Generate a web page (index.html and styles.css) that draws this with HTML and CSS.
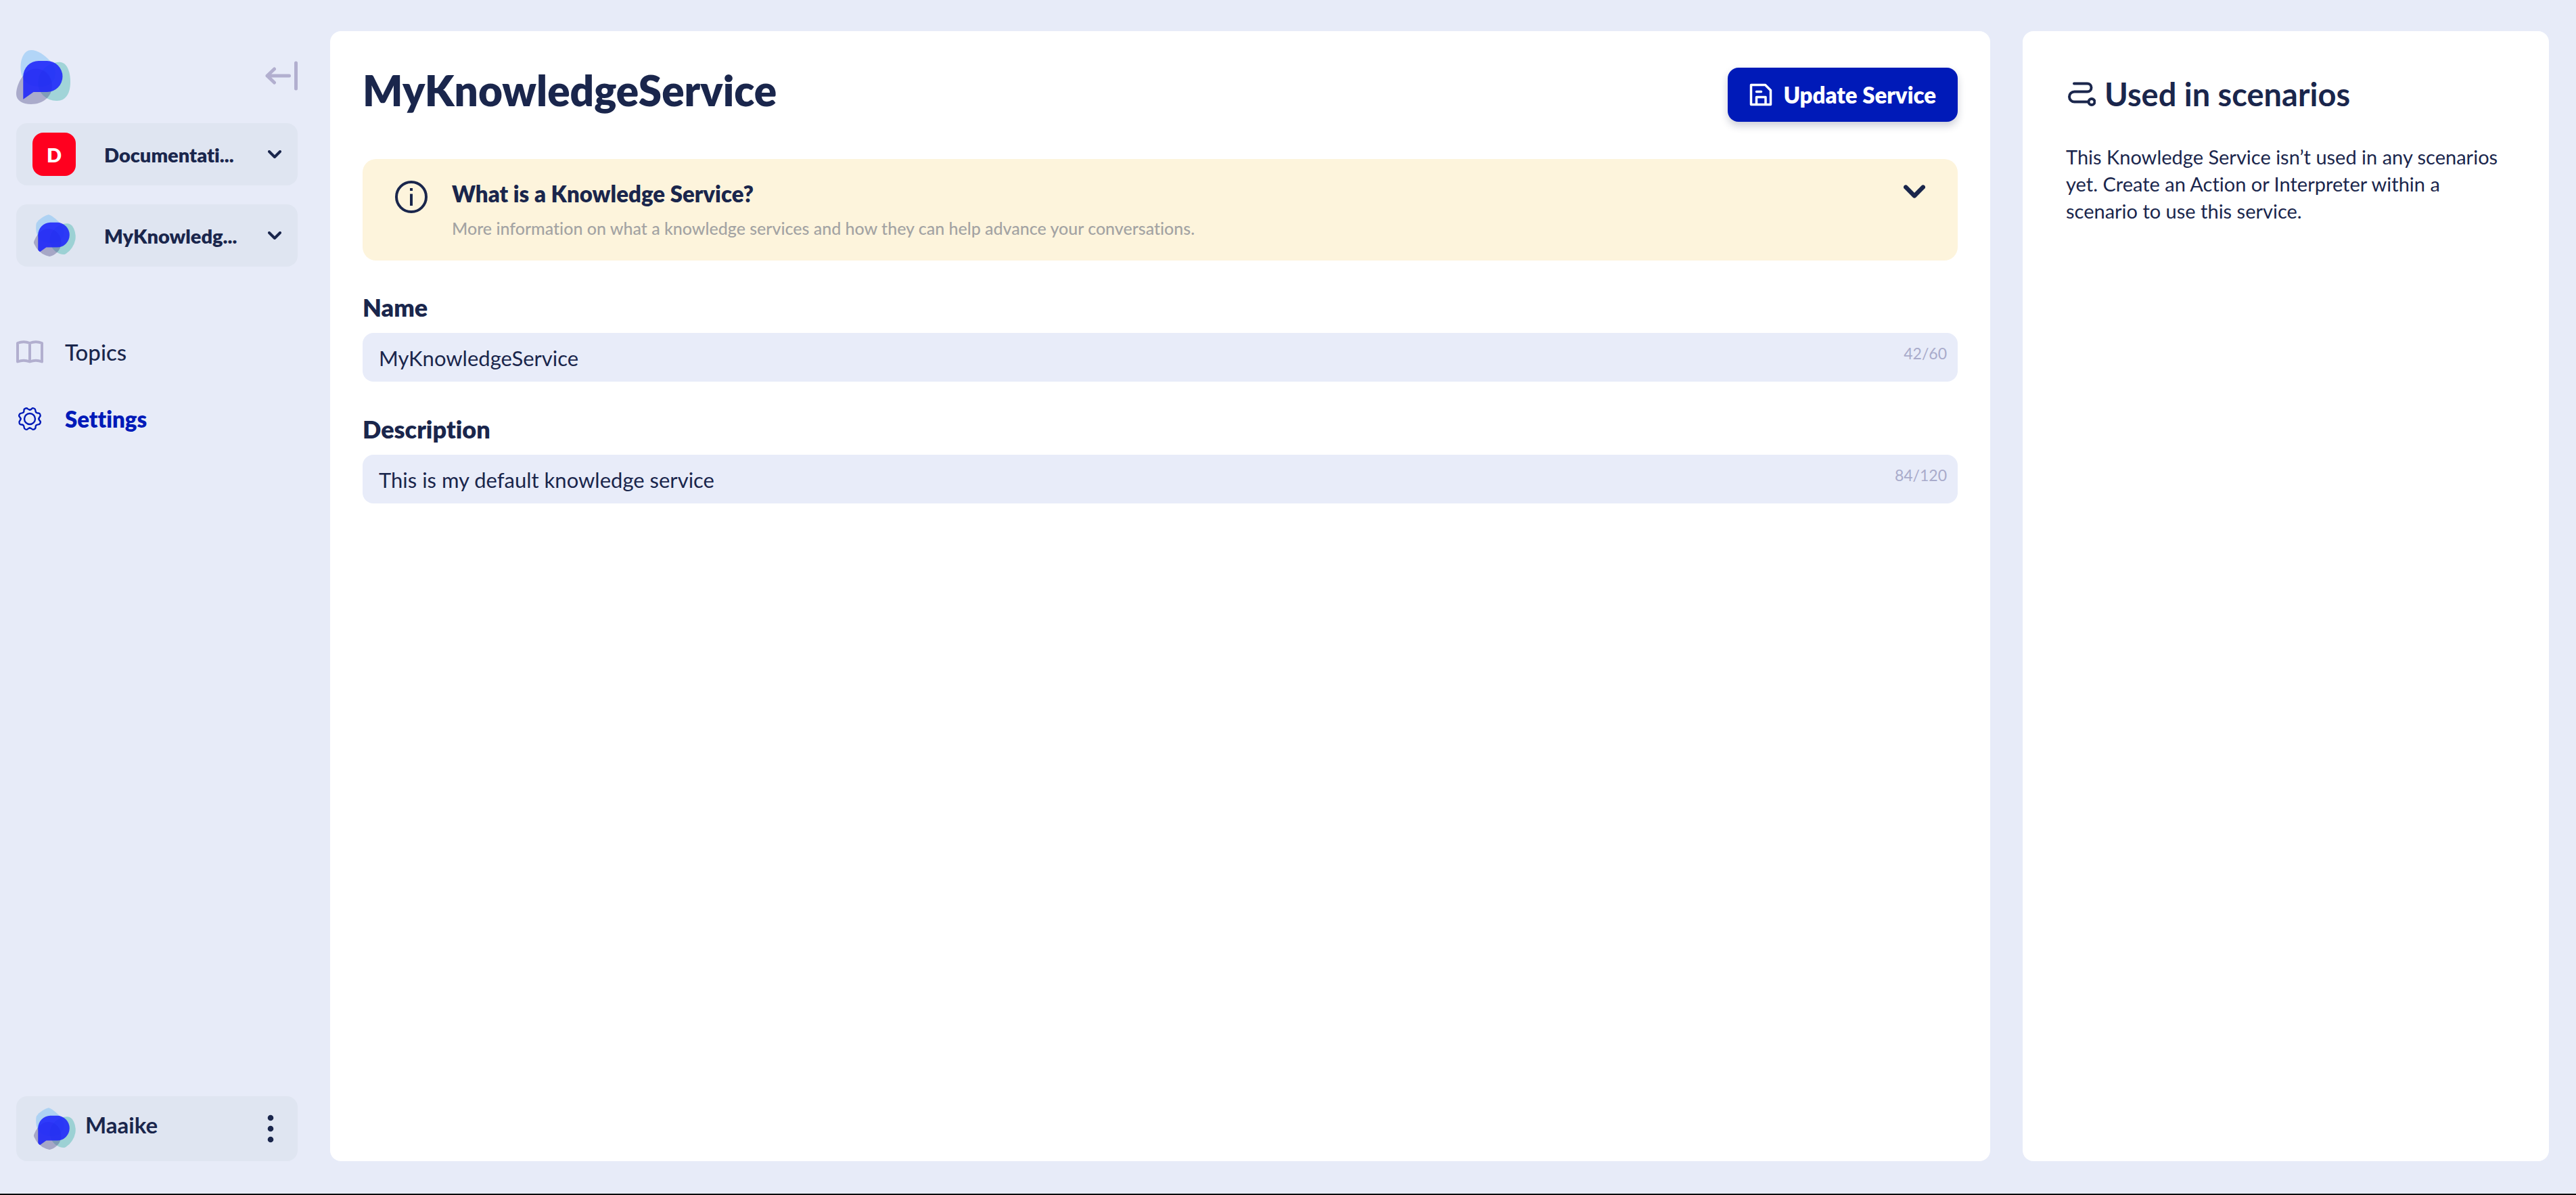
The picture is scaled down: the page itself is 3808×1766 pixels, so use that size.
FILE: index.html
```html
<!DOCTYPE html>
<html lang="en">
<head>
<meta charset="utf-8">
<meta name="viewport" content="width=device-width, initial-scale=1">
<title>MyKnowledgeService – Settings</title>
<link rel="stylesheet" href="styles.css">
</head>
<body>
<svg class="symbols" aria-hidden="true">
  <symbol id="logo" viewBox="0 0 80 80">
    <path fill="#7ec0f6" fill-opacity=".5" d="M22 0C32 0 41 7 49 15C54 20 58 26 58 34C58 46 49 54 37 54C26 54 18 52 12 45C8 40 6.500 32 6.500 25C6.500 12 12 0 22 0Z"/>
    <path fill="#4cb9b1" fill-opacity=".45" d="M64 17.700C75 17.700 80 32 80 47C80 63 74 75 60 75C44 75 32 63 32 48C32 32 47 17.700 64 17.700Z"/>
    <path fill="#4f4a86" fill-opacity=".4" d="M29 27.500C42 27.500 53 38 53 53C53 69 39 80 22 80C9 80 0 74 0 65C0 50 12 27.500 29 27.500Z"/>
    <path fill="#1c24fa" fill-opacity=".88" d="M10.300 72.700V39A23 23 0 0 1 33 16H45.500A23 23 0 0 1 45.500 62H25.500Z"/>
  </symbol>
  <symbol id="chevron" viewBox="0 0 20 12">
    <path fill="none" stroke="currentColor" stroke-width="4" stroke-linecap="round" stroke-linejoin="round" d="M2 2l8 8 8-8"/>
  </symbol>
</svg>

<div class="app">
  <aside class="sidebar">
    <div class="brand">
      <svg class="brand-logo" aria-label="Home"><use href="#logo"/></svg>
      <button class="icon-button collapse" aria-label="Collapse menu">
        <svg width="48" height="44" viewBox="0 0 48 44" fill="none" stroke="currentColor" stroke-width="5" stroke-linecap="round" stroke-linejoin="round"><path d="M45.500 3v38M35.500 22H3M13.500 12L3 22l10.500 10"/></svg>
      </button>
    </div>

    <button class="switcher">
      <span class="avatar avatar-letter">D</span>
      <span class="switcher-name">Documentati...</span>
      <svg class="chevron"><use href="#chevron"/></svg>
    </button>
    <button class="switcher">
      <svg class="avatar avatar-round"><use href="#logo"/></svg>
      <span class="switcher-name">MyKnowledg...</span>
      <svg class="chevron"><use href="#chevron"/></svg>
    </button>

    <nav class="nav">
      <a class="nav-link" href="#topics">
        <svg class="nav-icon nav-icon-muted" viewBox="0 0 40 40" fill="none" stroke="currentColor" stroke-width="4" stroke-linejoin="round"><path d="M20 7Q11 3.500 2 7V34.500Q11 31 20 34.500Q29 31 38 34.500V7Q29 3.500 20 7ZM20 7V34.500"/></svg>
        Topics
      </a>
      <a class="nav-link nav-link-active" href="#settings" aria-current="page">
        <svg class="nav-icon" viewBox="-20 -20 40 40" fill="none" stroke="currentColor" stroke-width="2.400" stroke-linecap="round" stroke-linejoin="round">
          <circle r="8"/>
          <path id="tooth" d="M0-13.400C3.400-13.400 2.400-17.200 6.200-15.500C10-14 7.100-11.900 9.500-9.500"/>
          <use href="#tooth" transform="rotate(45)"/><use href="#tooth" transform="rotate(90)"/><use href="#tooth" transform="rotate(135)"/><use href="#tooth" transform="rotate(180)"/><use href="#tooth" transform="rotate(225)"/><use href="#tooth" transform="rotate(270)"/><use href="#tooth" transform="rotate(315)"/>
        </svg>
        Settings
      </a>
    </nav>

    <div class="profile">
      <svg class="avatar avatar-round"><use href="#logo"/></svg>
      <span class="profile-name">Maaike</span>
      <button class="icon-button profile-menu" aria-label="Account menu">
        <svg width="12" height="44" viewBox="0 0 12 44" fill="currentColor"><circle cx="6" cy="6" r="4.300"/><circle cx="6" cy="22" r="4.300"/><circle cx="6" cy="38" r="4.300"/></svg>
      </button>
    </div>
  </aside>

  <main class="panel service">
    <header class="service-header">
      <h1>MyKnowledgeService</h1>
      <button class="primary" type="submit" form="service-form">
        <svg width="34" height="34" viewBox="0 0 34 34" fill="none" stroke="currentColor" stroke-width="3.500" stroke-linecap="round" stroke-linejoin="round"><path d="M2.500 2.500H23.500L31.500 10.500V31.500H2.500ZM10.500 31V20.500H24V31M10.500 12.500H17.500"/></svg>
        Update Service
      </button>
    </header>

    <section class="info">
      <svg class="info-icon" viewBox="0 0 48 48" fill="none" stroke="currentColor" stroke-width="4"><circle cx="24" cy="24" r="22"/><path d="M24 19.500V37M24 11v4"/></svg>
      <div class="info-text">
        <h2>What is a Knowledge Service?</h2>
        <p>More information on what a knowledge services and how they can help advance your conversations.</p>
      </div>
      <button class="icon-button info-toggle" aria-label="Show more">
        <svg class="chevron-large"><use href="#chevron"/></svg>
      </button>
    </section>

    <form class="form" id="service-form">
      <div class="field">
        <label for="name">Name</label>
        <div class="control">
          <input id="name" type="text" value="MyKnowledgeService">
          <span class="counter">42/60</span>
        </div>
      </div>
      <div class="field">
        <label for="description">Description</label>
        <div class="control">
          <input id="description" type="text" value="This is my default knowledge service">
          <span class="counter">84/120</span>
        </div>
      </div>
    </form>
  </main>

  <aside class="panel usage">
    <h2 class="usage-title">
      <svg width="44" height="40" viewBox="-1 0 44 40" fill="none" stroke="currentColor" stroke-width="4" stroke-linecap="round"><path d="M11 4.500H30.500a6 6 0 0 1 0 12H11.500a7.500 7.500 0 0 0 0 15H31"/><circle cx="37" cy="31.500" r="4.500"/></svg>
      Used in scenarios
    </h2>
    <p>This Knowledge Service isn’t used in any scenarios yet. Create an Action or Interpreter within a scenario to use this service.</p>
  </aside>
</div>
</body>
</html>
```
FILE: styles.css
```css
:root {
  --page: #e7ebf8;
  --field: #e8ecf9;
  --tile: #dfe5f1;
  --ink: #1a264c;
  --blue: #001ab8;
  --muted: #b2afcf;
}

* {
  box-sizing: border-box;
}

body {
  margin: 0;
  background: var(--page);
  color: var(--ink);
  font-family: Lato, "Liberation Sans", sans-serif;
  font-variant-ligatures: none;
}

h1, h2, p {
  margin: 0;
}

button, input {
  font: inherit;
  color: inherit;
  border: 0;
}

svg {
  display: block;
  flex: none;
}

.symbols {
  position: absolute;
  width: 0;
  height: 0;
}

.app {
  display: grid;
  grid-template-columns: 416px minmax(0, 1fr) 778px;
  gap: 48px;
  min-height: 100vh;
  padding: 46px 40px 48px 24px;
  border-bottom: 2px solid #050a05;
}

.icon-button {
  flex: none;
  padding: 0;
  background: none;
}

/* Sidebar */
.sidebar {
  display: flex;
  flex-direction: column;
  padding-top: 28px;
}

.brand {
  display: flex;
  justify-content: space-between;
  margin-bottom: 28px;
}

.brand-logo {
  width: 80px;
  height: 80px;
}

.collapse {
  height: 44px;
  margin-top: 16px;
  color: var(--muted);
}

.switcher, .profile {
  display: flex;
  align-items: center;
  background: var(--tile);
  border-radius: 16px;
  padding: 0 24px;
}

.switcher {
  height: 92px;
  margin-bottom: 28px;
  text-align: left;
}

.avatar {
  flex: none;
  width: 64px;
  height: 64px;
}

.avatar-letter {
  display: grid;
  place-items: center;
  border-radius: 16px;
  background: #ff001f;
  color: #fff;
  font-size: 29px;
  font-weight: 800;
}

.avatar-round {
  border-radius: 50%;
}

.switcher-name {
  flex: 1;
  margin-left: 42px;
  font-size: 29px;
  font-weight: 800;
  white-space: nowrap;
}

.chevron {
  width: 20px;
  height: 12px;
}

.nav {
  display: flex;
  flex-direction: column;
  gap: 57px;
  margin-top: 77px;
}

.nav-link {
  display: flex;
  align-items: center;
  gap: 32px;
  color: inherit;
  font-size: 33px;
  font-weight: 500;
  line-height: 42px;
  text-decoration: none;
}

.nav-link-active {
  color: var(--blue);
  font-weight: 800;
}

.nav-icon {
  width: 40px;
  height: 40px;
}

.nav-icon-muted {
  color: var(--muted);
}

.profile {
  height: 96px;
  margin-top: auto;
}

.profile-name {
  flex: 1;
  margin-left: 14px;
  padding-bottom: 12px;
  font-size: 33px;
  font-weight: 700;
}

.profile-menu {
  margin-right: 10px;
}

/* Panels */
.panel {
  background: #fff;
  border-radius: 16px;
}

.service {
  padding: 54px 48px;
}

.service-header {
  display: flex;
  justify-content: space-between;
  align-items: flex-start;
  margin-bottom: 55px;
}

h1 {
  font-size: 62px;
  font-weight: 800;
  line-height: 66px;
}

.primary {
  display: flex;
  align-items: center;
  gap: 16px;
  height: 80px;
  padding: 0 32px;
  border-radius: 16px;
  background: var(--blue);
  color: #fff;
  font-size: 33px;
  font-weight: 800;
  box-shadow: 0 6px 12px rgba(26, 38, 76, .22);
}

.info {
  display: flex;
  align-items: flex-start;
  padding: 32px 48px;
  margin-bottom: 47px;
  border-radius: 20px;
  background: #fdf4dc;
}

.info-icon {
  width: 48px;
  height: 48px;
}

.info-text {
  flex: 1;
  margin-left: 36px;
}

.info h2 {
  margin-bottom: 16px;
  font-size: 33px;
  font-weight: 800;
  line-height: 38px;
}

.info p {
  color: #a3a3a3;
  font-size: 25px;
  font-weight: 500;
  line-height: 32px;
}

.info-toggle {
  padding-top: 6px;
}

.chevron-large {
  width: 32px;
  height: 20px;
}

.form {
  display: flex;
  flex-direction: column;
  gap: 48px;
}

.field {
  display: flex;
  flex-direction: column;
  gap: 16px;
}

.field label {
  font-size: 36px;
  font-weight: 800;
  line-height: 44px;
}

.control {
  display: flex;
  align-items: flex-start;
  height: 72px;
  padding-right: 16px;
  border-radius: 16px;
  background: var(--field);
}

.control input {
  flex: 1;
  min-width: 0;
  height: 72px;
  padding: 2px 24px 0;
  border-radius: 16px;
  background: none;
  font-size: 31px;
}

.counter {
  padding-top: 16px;
  color: #a9abcb;
  font-size: 23px;
  line-height: 28px;
}

.usage {
  padding: 65px 64px;
}

.usage-title {
  display: flex;
  align-items: center;
  gap: 13px;
  margin-bottom: 45px;
  font-size: 47px;
  font-weight: 700;
  line-height: 56px;
}

.usage p {
  font-size: 29px;
  line-height: 40px;
}
```
